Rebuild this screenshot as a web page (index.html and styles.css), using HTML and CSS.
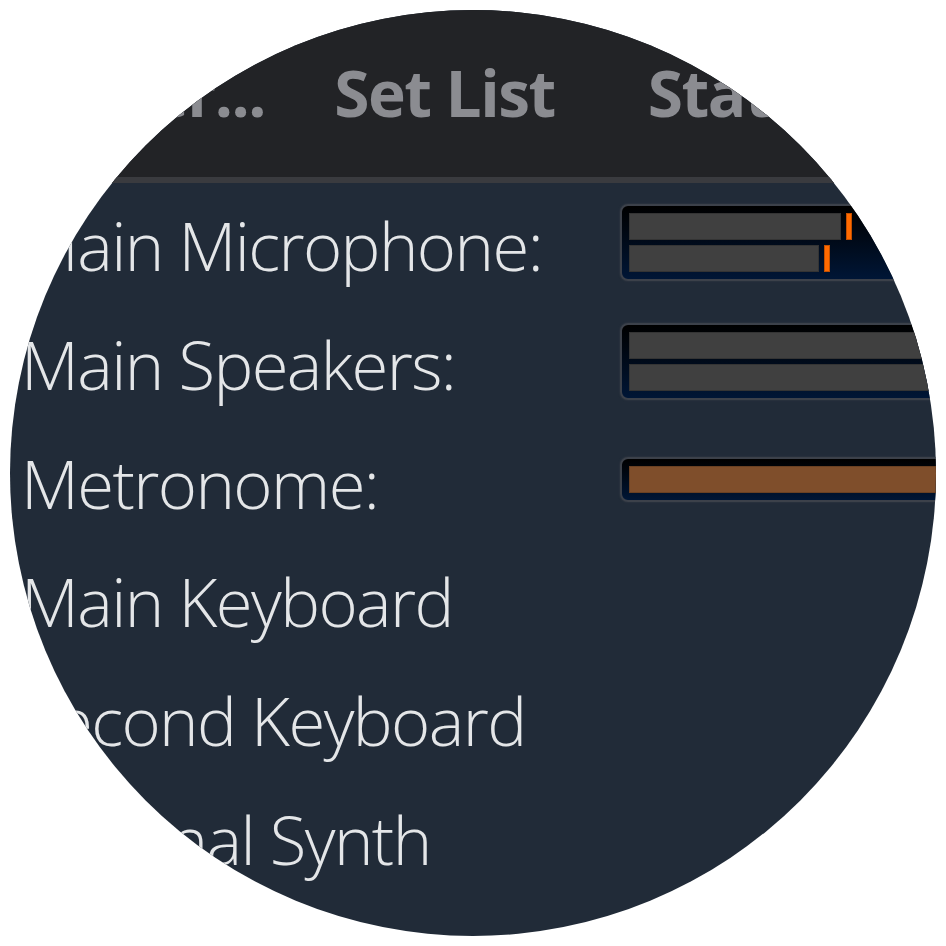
FILE: index.html
```html
<!DOCTYPE html>
<html lang="en">
<head>
    <meta charset="UTF-8">
    <meta name="viewport" content="width=device-width, initial-scale=1.0">
    <title>Audio Setup</title>
    <link rel="stylesheet" href="styles.css">
</head>
<body>
    <div class="lens">
        <!-- 顶部标签栏 -->
        <div class="tabs">
            <div class="tab tab-first">Mixer...</div>
            <div class="tab">Set List</div>
            <div class="tab">Status</div>
        </div>

        <!-- 设备列表 -->
        <div class="devices">
            <div class="row">
                <div class="label">Main Microphone:</div>
                <div class="meter">
                    <div class="bar">
                        <div class="fill" style="width: 212px"></div>
                        <div class="peak"></div>
                    </div>
                    <div class="bar">
                        <div class="fill" style="width: 190px"></div>
                        <div class="peak"></div>
                    </div>
                </div>
            </div>
            <div class="row">
                <div class="label">Main Speakers:</div>
                <div class="meter">
                    <div class="bar"><div class="fill full"></div></div>
                    <div class="bar"><div class="fill full"></div></div>
                </div>
            </div>
            <div class="row">
                <div class="label">Metronome:</div>
                <div class="meter">
                    <div class="bar"><div class="fill full click"></div></div>
                </div>
            </div>
            <div class="row">
                <div class="label">Main Keyboard</div>
            </div>
            <div class="row">
                <div class="label">Second Keyboard</div>
            </div>
            <div class="row">
                <div class="label">External Synth</div>
            </div>
        </div>
    </div>
</body>
</html>
```

FILE: styles.css
```css
body{
    margin: 0;
    background-color: #fff;
    font-family: "Open Sans", "Noto Sans", sans-serif;
}
/* 圆形放大镜 */
.lens{
    width: 926px;
    height: 926px;
    margin: 10px 0 0 10px;
    border-radius: 50%;
    overflow: hidden;
    background-color: #212b38;
}

/* 标签栏 */
.tabs{
    display: flex;
    height: 173px;
    box-sizing: border-box;
    padding-top: 51px;
    background-color: #222326;
    border-bottom: 6px solid #3a3b3f;
}
.tab{
    flex: none;
    width: 311px;
    font-size: 64px;
    line-height: 64px;
    font-weight: 700;
    letter-spacing: -1.5px;
    color: #8b8c91;
    text-align: center;
    white-space: nowrap;
}
.tab-first{
    width: 279px;
    box-sizing: border-box;
    padding-right: 24px;
    text-align: right;
}
.tab:last-child{
    width: 290px;
}

/* 设备行 */
.row{
    display: flex;
    align-items: center;
    height: 118.7px;
}
.label{
    flex: none;
    width: 599px;
    padding: 7px 0 0 11px;
    font-size: 67px;
    line-height: 67px;
    font-weight: 360;
    letter-spacing: -1.6px;
    color: #e4e6e8;
    white-space: nowrap;
}

/* 电平表 */
.meter{
    flex: none;
    display: flex;
    flex-direction: column;
    gap: 5px;
    width: 420px;
    padding: 7px;
    border: 2px solid #3c414a;
    border-radius: 8px;
    box-shadow: 0 0 2px #3c414a;
    background: linear-gradient(#000 0%, #00060f 30%, #001636 100%);
}
.bar{
    display: flex;
    height: 27px;
}
.fill{
    height: 100%;
    background-color: #404040;
    box-shadow: inset 0 0 0 1px #343434;
}
.full{
    flex: 1;
}
.click{
    background-color: #7f4e2b;
    box-shadow: inset 0 0 0 1px #6a4123;
}
.peak{
    width: 6px;
    margin-left: 5px;
    background-color: #ff6a00;
    box-shadow: inset 0 0 0 1px #c24f00;
}
```
